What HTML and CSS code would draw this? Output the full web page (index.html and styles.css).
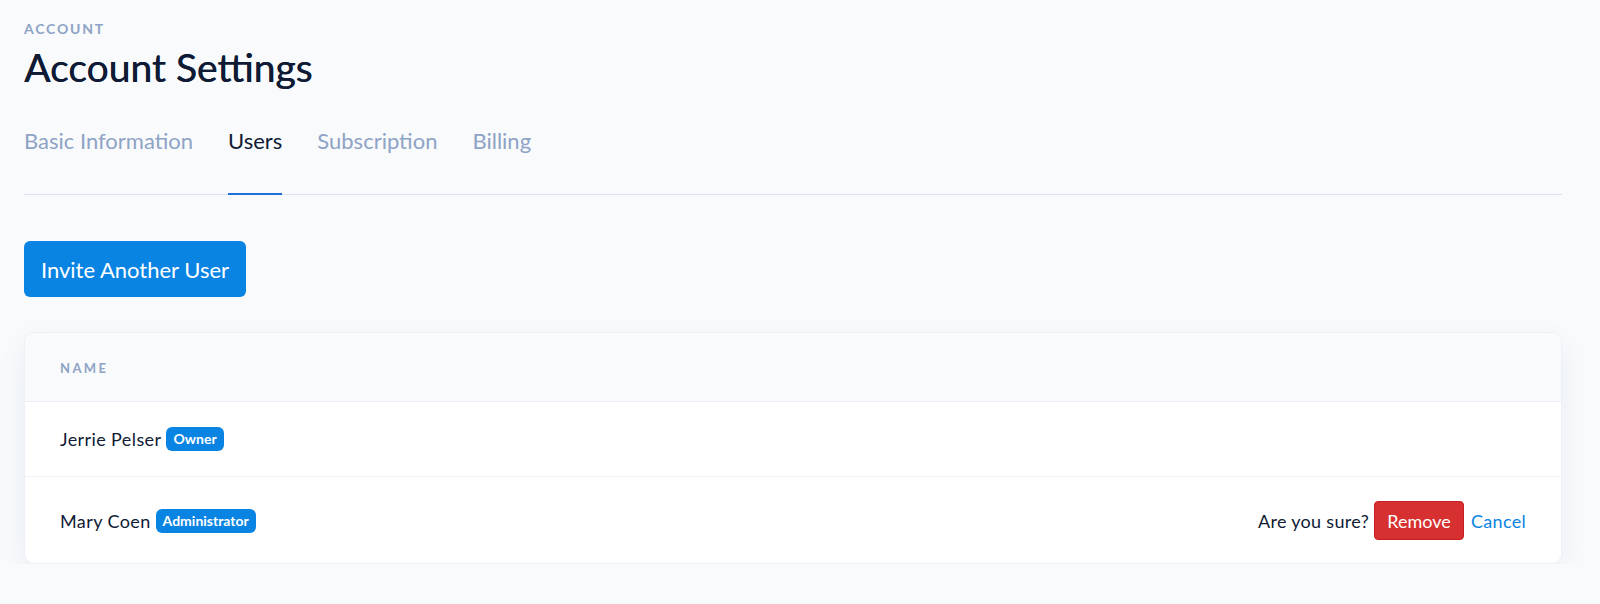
FILE: index.html
```html
<!DOCTYPE html>
<html>
<head>
<meta charset="utf-8">
<link rel="stylesheet" href="styles.css">
</head>
<body>
<div class="page">
  <div class="eyebrow">ACCOUNT</div>
  <h1 class="title">Account Settings</h1>
  <nav class="tabs">
    <a class="tab">Basic Information</a>
    <a class="tab active">Users</a>
    <a class="tab">Subscription</a>
    <a class="tab">Billing</a>
  </nav>
  <div class="actions">
    <button class="btn-primary">Invite Another User</button>
  </div>
  <div class="card">
    <div class="card-head">NAME</div>
    <div class="row">
      <div class="user"><span class="name">Jerrie Pelser</span><span class="badge">Owner</span></div>
    </div>
    <div class="row">
      <div class="user"><span class="name">Mary Coen</span><span class="badge">Administrator</span></div>
      <div class="confirm">
        <span class="sure">Are you sure?</span>
        <button class="btn-danger">Remove</button>
        <a class="link">Cancel</a>
      </div>
    </div>
  </div>
</div>
</body>
</html>
```

FILE: styles.css
```css
* { box-sizing: border-box; }
html, body { margin: 0; padding: 0; }
body {
  background: #f8fafc;
  font-family: Lato, "Noto Sans", sans-serif;
  color: #0f1b35;
}
.page {
  padding: 21px 38px 0 24px;
}
.eyebrow {
  font-size: 14px;
  font-weight: 700;
  letter-spacing: 1.8px;
  color: #8ea3c5;
  line-height: 16px;
}
.title {
  margin: 7px 0 0;
  font-size: 39px;
  font-weight: 400;
  line-height: 46px;
  color: #0f1b35;
  text-shadow: 0.4px 0 0 #0f1b35;
}
.tabs {
  display: flex;
  gap: 35px;
  margin-top: 37px;
  border-bottom: 1px solid #dbe5f1;
}
.tab {
  font-size: 22px;
  color: #8ea3c5;
  line-height: 27px;
  padding-bottom: 39px;
  border-bottom: 2px solid transparent;
  margin-bottom: -1px;
}
.tab.active {
  color: #0f1b35;
  border-bottom-color: #1e6fd9;
}
.actions {
  margin-top: 46px;
}
.btn-primary {
  font-family: inherit;
  font-size: 22px;
  color: #fff;
  background: #0984e3;
  border: none;
  border-radius: 6px;
  height: 56px;
  padding: 0;
  width: 222px;
}
.card {
  margin-top: 35px;
  background: #fff;
  border: 1px solid #edf1f7;
  border-radius: 10px;
  box-shadow: 0 10px 30px rgba(30, 50, 90, 0.06);
  overflow: hidden;
}
.card-head {
  background: #f8fafc;
  padding: 27px 35px 0;
  height: 69px;
  font-size: 13px;
  font-weight: 700;
  letter-spacing: 2.4px;
  color: #8ea3c5;
  border-bottom: 1px solid #edf1f7;
}
.row {
  display: flex;
  align-items: center;
  justify-content: space-between;
  padding: 24px 35px;
  min-height: 74px;
}
.row + .row {
  border-top: 1px solid #edf1f7;
  padding-bottom: 23px;
}
.user {
  display: flex;
  align-items: center;
  gap: 5px;
}
.name {
  font-size: 18px;
  letter-spacing: 0.4px;
  color: #0f1b35;
}
.badge {
  background: #0984e3;
  color: #fff;
  font-size: 14px;
  font-weight: 700;
  padding: 3px 7px;
  border-radius: 6px;
  line-height: 18px;
}
.confirm {
  display: flex;
  align-items: center;
  gap: 5px;
}
.sure {
  font-size: 18px;
  letter-spacing: 0.3px;
  color: #0f1b35;
}
.btn-danger {
  font-family: inherit;
  font-size: 18px;
  color: #fff;
  background: #d63031;
  border: 1px solid #c91f22;
  border-radius: 4px;
  height: 39px;
  width: 90px;
  padding: 0;
}
.link {
  font-size: 18px;
  letter-spacing: 0.3px;
  color: #0984e3;
  margin-left: 2px;
}
```
